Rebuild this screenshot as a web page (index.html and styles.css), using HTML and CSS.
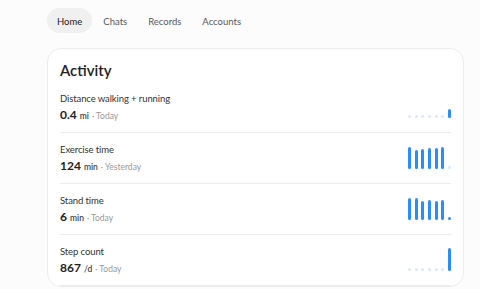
FILE: index.html
```html
<!DOCTYPE html>
<html lang="en">
<head>
  <meta charset="UTF-8">
  <meta name="viewport" content="width=device-width, initial-scale=1.0">
  <title>Activity</title>
  <link rel="stylesheet" href="styles.css">
</head>
<body>
  <div class="page">
    <nav class="tabs">
      <a class="tab active" href="#">Home</a>
      <a class="tab" href="#">Chats</a>
      <a class="tab" href="#">Records</a>
      <a class="tab" href="#">Accounts</a>
    </nav>
    <div class="card">
      <h2>Activity</h2>
      <div class="metric">
        <div class="info">
          <div class="name">Distance walking + running</div>
          <div class="value"><b>0.4</b><span class="unit">mi</span><span class="when">· Today</span></div>
        </div>
        <div class="chart">
          <i class="zero"></i><i class="zero"></i><i class="zero"></i><i class="zero"></i><i class="zero"></i><i class="zero"></i>
          <i style="height: 9px"></i>
        </div>
      </div>
      <div class="metric">
        <div class="info">
          <div class="name">Exercise time</div>
          <div class="value"><b>124</b><span class="unit">min</span><span class="when">· Yesterday</span></div>
        </div>
        <div class="chart">
          <i style="height: 22px"></i><i style="height: 19px"></i><i style="height: 20px"></i><i style="height: 21px"></i><i style="height: 21px"></i><i style="height: 22px"></i>
          <i class="zero"></i>
        </div>
      </div>
      <div class="metric">
        <div class="info">
          <div class="name">Stand time</div>
          <div class="value"><b>6</b><span class="unit">min</span><span class="when">· Today</span></div>
        </div>
        <div class="chart">
          <i style="height: 22px"></i><i style="height: 22px"></i><i style="height: 19px"></i><i style="height: 20px"></i><i style="height: 19px"></i><i style="height: 20px"></i>
          <i style="height: 3px"></i>
        </div>
      </div>
      <div class="metric">
        <div class="info">
          <div class="name">Step count</div>
          <div class="value"><b>867</b><span class="unit">/d</span><span class="when">· Today</span></div>
        </div>
        <div class="chart">
          <i class="zero"></i><i class="zero"></i><i class="zero"></i><i class="zero"></i><i class="zero"></i><i class="zero"></i>
          <i style="height: 23px"></i>
        </div>
      </div>
    </div>
  </div>
</body>
</html>
```

FILE: styles.css
```css
body {
    font-family: 'Lato', sans-serif;
    margin: 0;
    padding: 0;
    background: #fcfcfc;
    color: #222;
}
.page {
    padding: 8px 16px 0 47px;
}
.tabs {
    display: flex;
    gap: 1px;
    height: 25px;
}
.tab {
    display: flex;
    align-items: center;
    padding: 1px 10px 0 10px;
    border-radius: 13px;
    font-size: 9.5px;
    color: #5a5a5a;
    text-decoration: none;
}
.tab.active {
    background: #f0f0f0;
    color: #222;
}
.card {
    margin-top: 15px;
    background: #fff;
    border: 1px solid #ececec;
    border-radius: 14px;
    padding: 11px 12px 0 12px;
}
h2 {
    margin: 0 0 2px 0;
    font-size: 15px;
    font-weight: 600;
    line-height: 20px;
}
.metric {
    display: flex;
    align-items: center;
    justify-content: space-between;
    padding: 9px 0;
    border-bottom: 1px solid #ececec;
}
.name {
    font-size: 9.5px;
    letter-spacing: -0.1px;
    line-height: 16px;
    color: #333;
}
.value {
    display: flex;
    align-items: baseline;
    gap: 3px;
    height: 16px;
    font-size: 8.5px;
    line-height: 16px;
    color: #444;
}
.value b {
    font-size: 12px;
    font-weight: 700;
    color: #222;
}
.unit {
    font-weight: 600;
}
.when {
    color: #999;
}
.chart {
    width: 43px;
    height: 22px;
    display: flex;
    align-items: flex-end;
    justify-content: space-between;
}
.chart i {
    width: 3px;
    border-radius: 1.5px;
    background: #2a8dff;
}
.chart i.zero {
    height: 3px;
    background: #dce9fb;
}
```
